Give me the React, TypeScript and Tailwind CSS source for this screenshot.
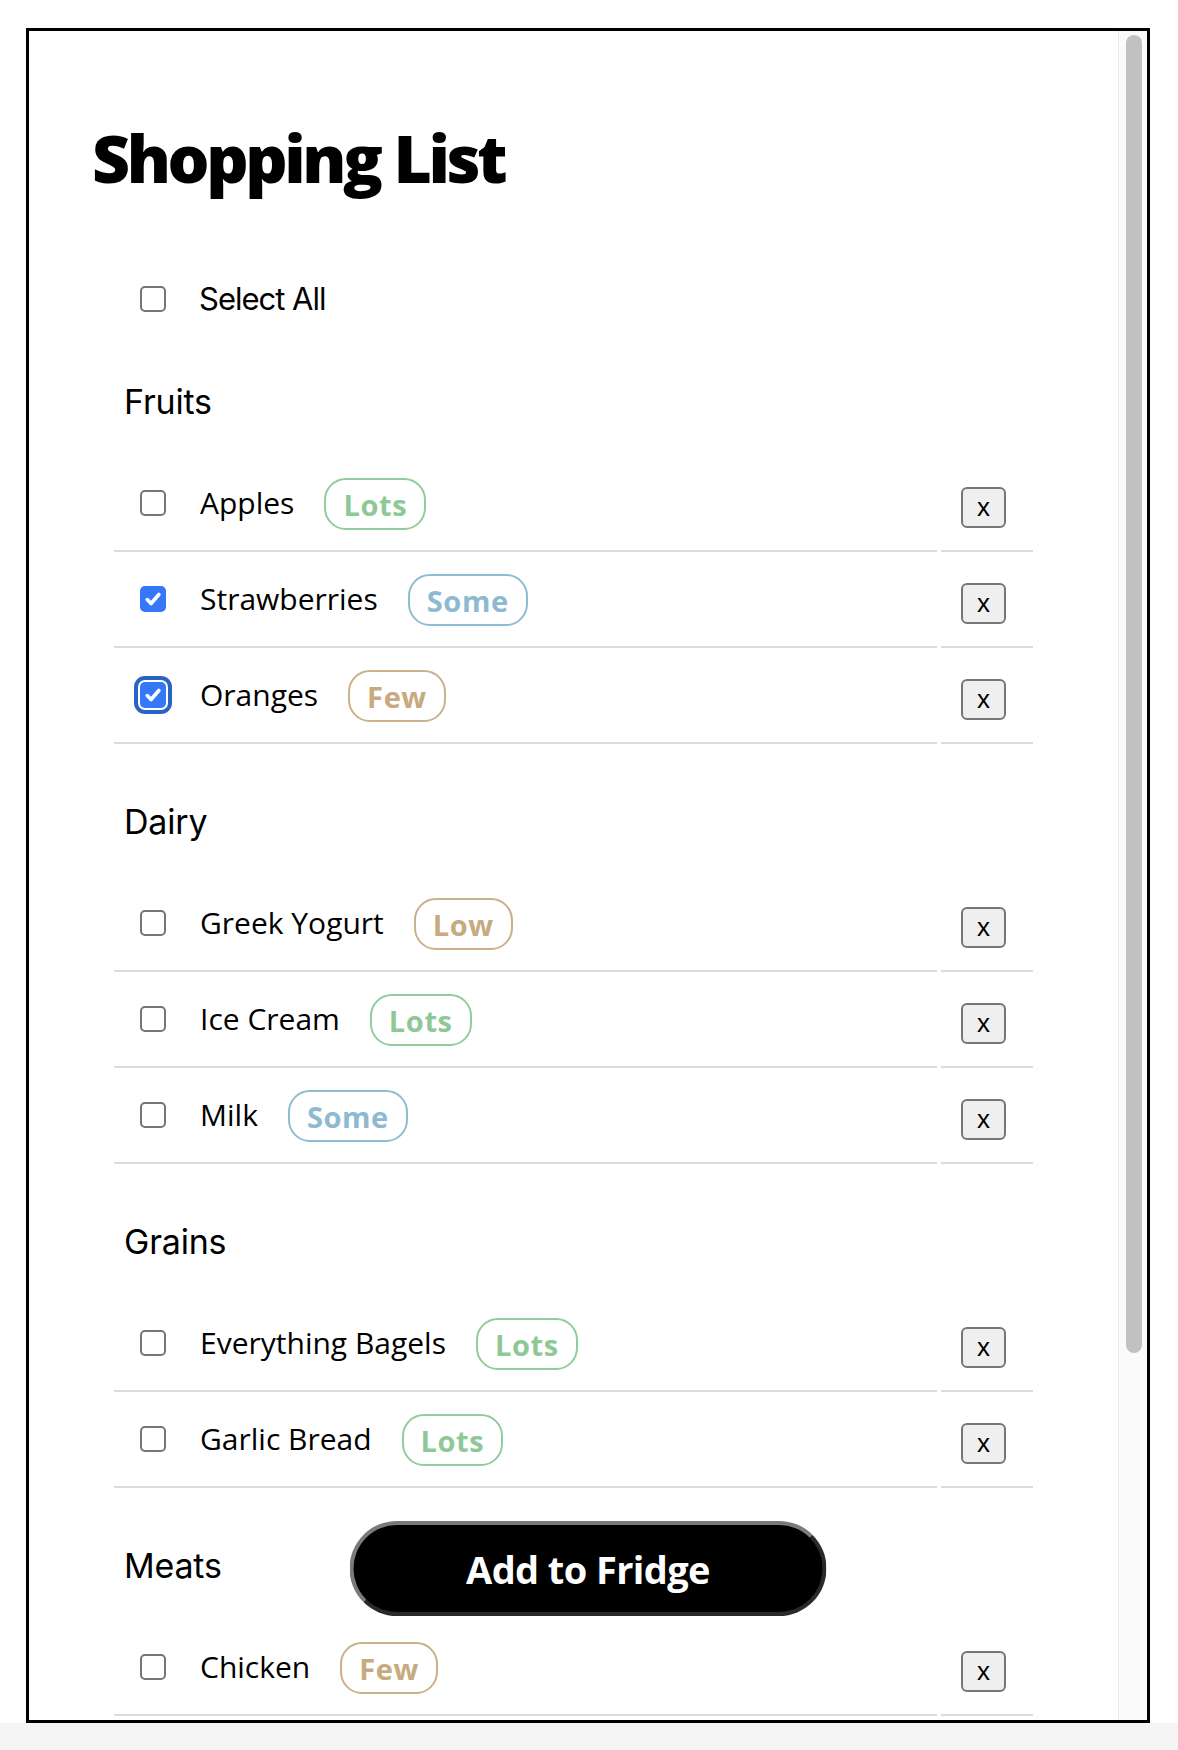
import React from "react";

type Level = "Lots" | "Some" | "Few" | "Low";

type Item = {
  name: string;
  level: Level;
  checked?: boolean;
  focused?: boolean;
};

type Section = {
  title: string;
  items: Item[];
};

const sections: Section[] = [
  {
    title: "Fruits",
    items: [
      { name: "Apples", level: "Lots" },
      { name: "Strawberries", level: "Some", checked: true },
      { name: "Oranges", level: "Few", checked: true, focused: true },
    ],
  },
  {
    title: "Dairy",
    items: [
      { name: "Greek Yogurt", level: "Low" },
      { name: "Ice Cream", level: "Lots" },
      { name: "Milk", level: "Some" },
    ],
  },
  {
    title: "Grains",
    items: [
      { name: "Everything Bagels", level: "Lots" },
      { name: "Garlic Bread", level: "Lots" },
    ],
  },
  {
    title: "Meats",
    items: [{ name: "Chicken", level: "Few" }],
  },
];

const badgeStyles: Record<Level, string> = {
  Lots: "border-[#93cc9b] text-[#8fc897]",
  Some: "border-[#90bcd1] text-[#8dbad0]",
  Few: "border-[#cbb08a] text-[#c7aa7f]",
  Low: "border-[#cbb08a] text-[#c7aa7f]",
};

function Checkbox({ checked, focused }: { checked?: boolean; focused?: boolean }) {
  if (checked) {
    return (
      <span
        className={
          "flex h-[26px] w-[26px] shrink-0 items-center justify-center rounded-[5px] bg-[#3478f6] " +
          (focused ? "ring-4 ring-[#2a63c8] ring-offset-2 ring-offset-white" : "")
        }
      >
        <svg viewBox="0 0 26 26" className="h-[26px] w-[26px]">
          <path
            d="M7.2 13.6l3.9 3.9 7.8-9"
            fill="none"
            stroke="white"
            strokeWidth="3.6"
            strokeLinecap="round"
            strokeLinejoin="round"
          />
        </svg>
      </span>
    );
  }
  return <span className="block h-[26px] w-[26px] shrink-0 rounded-[5px] border-2 border-[#767676] bg-white" />;
}

function ItemRow({ item }: { item: Item }) {
  return (
    <div className="flex h-[96px] gap-[4px]">
      <div className="flex flex-1 items-center border-b-2 border-[#dcdcdc] pl-[26px]">
        <Checkbox checked={item.checked} focused={item.focused} />
        <span className="ml-[34px] font-['Open_Sans',sans-serif] text-[30px] leading-[42px] text-black">
          {item.name}
        </span>
        <span
          className={
            "ml-[30px] mt-[2px] flex h-[52px] items-center rounded-[22px] border-2 px-[17px] font-['Open_Sans',sans-serif] text-[29px] font-bold leading-none tracking-[0.6px] " +
            badgeStyles[item.level]
          }
        >
          {item.level}
        </span>
      </div>
      <div className="flex w-[92px] items-center border-b-2 border-[#dcdcdc] pl-[20px]">
        <button className="mt-[8px] flex h-[41px] w-[45px] items-center justify-center rounded-[6px] border-2 border-[#767676] bg-[#efefef] font-['Liberation_Sans',Arial,sans-serif] text-[26px] leading-none text-black">
          x
        </button>
      </div>
    </div>
  );
}

export default function App() {
  return (
    <div className="flex h-[1750px] w-[1178px] flex-col bg-white">
      <div className="relative ml-[26px] mt-[28px] flex h-[1695px] w-[1124px] shrink-0 overflow-hidden border-[3px] border-black">
        <div className="flex-1 overflow-hidden pt-[86px]">
          <h1 className="pl-[63px] font-['Open_Sans',sans-serif] text-[66px] font-extrabold leading-[80px] tracking-[-3.4px] text-black">
            Shopping List
          </h1>

          <div className="mt-[77px] flex h-[50px] items-center pl-[111px]">
            <Checkbox />
            <span className="ml-[33px] font-['Inter',sans-serif] text-[31px] leading-[42px] tracking-[-1px] text-black">
              Select All
            </span>
          </div>

          {sections.map((section) => (
            <div key={section.title}>
              <h3 className="pb-[33px] pl-[95px] pt-[57px] font-['Inter',sans-serif] text-[34px] font-normal leading-[42px] tracking-[-0.2px] text-black">
                {section.title}
              </h3>
              <div className="px-[85px]">
                {section.items.map((item) => (
                  <ItemRow key={item.name} item={item} />
                ))}
              </div>
            </div>
          ))}
        </div>

        <div className="w-[29px] shrink-0 border-l border-[#ececec] bg-[#fafafa] pl-[7px] pt-[4px]">
          <div className="h-[1318px] w-[16px] rounded-full bg-[#c1c1c1]" />
        </div>

        <button className="absolute bottom-[104px] left-1/2 flex h-[95px] w-[477px] -translate-x-1/2 items-center justify-center rounded-full border-4 border-b-[#2a2a2a] border-l-[#7a7a7a] border-r-[#2a2a2a] border-t-[#7a7a7a] bg-black font-['Open_Sans',sans-serif] text-[38px] font-bold leading-none tracking-[-0.6px] text-white">
          Add to Fridge
        </button>
      </div>
      <div className="flex-1 bg-[#f5f5f5]" />
    </div>
  );
}
